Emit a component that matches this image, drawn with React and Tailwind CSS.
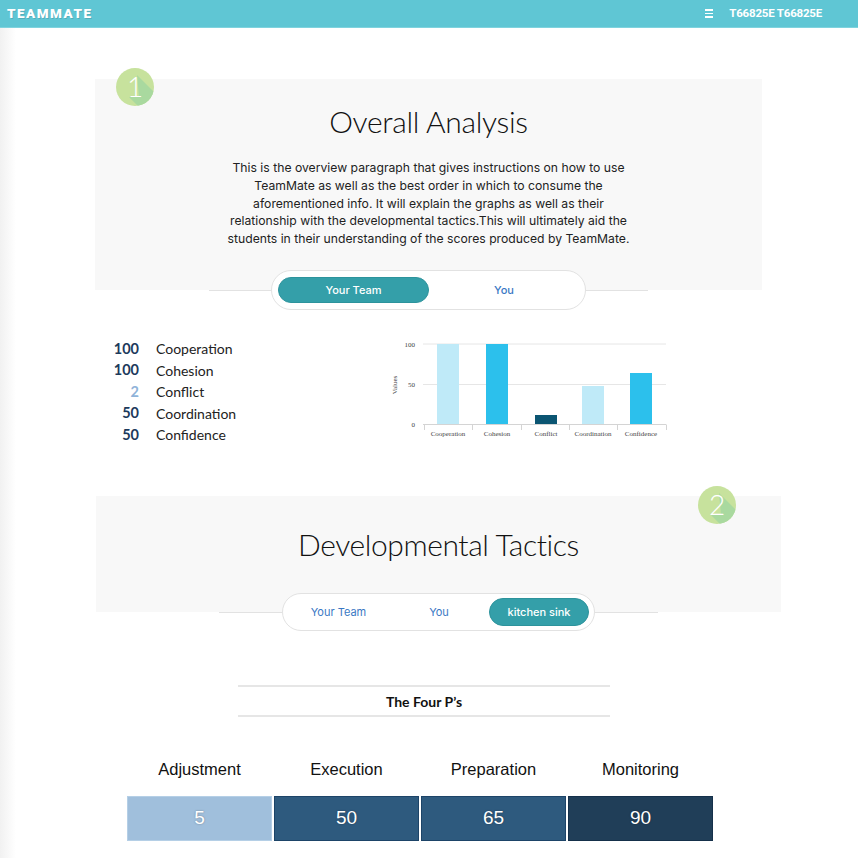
import React from "react";

function Badge({ n }) {
  return (
    <svg width="40" height="40" viewBox="0 0 40 40">
      <defs>
        <clipPath id={"c" + n}>
          <circle cx="20" cy="20" r="19" />
        </clipPath>
      </defs>
      <circle cx="20" cy="20" r="19" fill="#c7e29d" />
      <polygon points="22,8 52,38 52,52 36,52 14,30 24,30" fill="#a9d99f" clipPath={`url(#c${n})`} />
      <text x="20" y="30" textAnchor="middle" fontFamily="Lato, sans-serif" fontWeight="300" fontSize="28" fill="#ffffff">{n}</text>
    </svg>
  );
}

function Chart() {
  const bars = [
    { c: 63, v: 80, f: "#bfeaf8", label: "Cooperation" },
    { c: 112, v: 80, f: "#2cc0ec", label: "Cohesion" },
    { c: 161, v: 9, f: "#0b5572", label: "Conflict" },
    { c: 208, v: 38, f: "#bfeaf8", label: "Coordination" },
    { c: 256, v: 51, f: "#2cc0ec", label: "Confidence" },
  ];
  const ticks = [39, 87, 136, 184, 232, 281];
  return (
    <svg width="300" height="115" viewBox="0 0 300 115">
      {[9, 49.5].map((y) => (
        <line key={y} x1="38" x2="281" y1={y} y2={y} stroke="#e6e6e6" strokeWidth="1" />
      ))}
      <line x1="38" x2="281" y1="89.5" y2="89.5" stroke="#d4d4d4" strokeWidth="1" />
      {ticks.map((x) => (
        <line key={x} x1={x + 0.5} x2={x + 0.5} y1="89.5" y2="95" stroke="#d4d4d4" strokeWidth="1" />
      ))}
      <g fontFamily="'Liberation Serif', serif" fontSize="7" fill="#444">
        <text x="30" y="11.5" textAnchor="end">100</text>
        <text x="30" y="52" textAnchor="end">50</text>
        <text x="30" y="92" textAnchor="end">0</text>
        <text x="12" y="50" textAnchor="middle" transform="rotate(-90 12 50)">Values</text>
        {bars.map((b) => (
          <text key={b.label} x={b.c} y="100.5" textAnchor="middle">{b.label}</text>
        ))}
      </g>
      {bars.map((b) => (
        <rect key={b.label} x={b.c - 11} y={89 - b.v} width="22" height={b.v} fill={b.f} />
      ))}
    </svg>
  );
}

export default function App() {
  const stats = [
    ["100", "Cooperation", "text-[#1d3a5c]"],
    ["100", "Cohesion", "text-[#1d3a5c]"],
    ["2", "Conflict", "text-[#8fb3d9]"],
    ["50", "Coordination", "text-[#1d3a5c]"],
    ["50", "Confidence", "text-[#1d3a5c]"],
  ];
  const paragraph = [
    "This is the overview paragraph that gives instructions on how to use",
    "TeamMate as well as the best order in which to consume the",
    "aforementioned info. It will explain the graphs as well as their",
    "relationship with the developmental tactics.This will ultimately aid the",
    "students in their understanding of the scores produced by TeamMate.",
  ];
  const ps = [
    ["Adjustment", "5", "bg-[#a0bfdc] border-[#b5cfe6]"],
    ["Execution", "50", "bg-[#2e5a7e] border-[#1d4468]"],
    ["Preparation", "65", "bg-[#2e5a7e] border-[#1d4468]"],
    ["Monitoring", "90", "bg-[#203e58] border-[#15304a]"],
  ];
  return (
    <div className="relative w-[858px] h-[858px] overflow-hidden bg-white font-['Lato',sans-serif]">
      <div className="absolute left-0 top-[28px] bottom-0 w-[16px] bg-gradient-to-r from-[#f1f1f1] to-white" />
      {/* header */}
      <header className="h-[28px] bg-[#5fc6d4] border-b border-[#7fd3de] flex items-center px-[7px]">
        <span className="font-['Roboto',sans-serif] font-black text-[13.5px] tracking-[1.5px] text-white [text-shadow:1px_1px_0_rgba(0,0,0,0.12)]">TEAMMATE</span>
        <div className="ml-auto flex items-center mr-[29px]">
          <div className="flex flex-col gap-[2px] mr-[16px]">
            <span className="block w-[8px] h-[1.5px] bg-white" />
            <span className="block w-[8px] h-[1.5px] bg-white" />
            <span className="block w-[8px] h-[1.5px] bg-white" />
          </div>
          <span className="font-['Roboto',sans-serif] font-bold text-[11.5px] text-white tracking-[-0.2px]">T66825E T66825E</span>
        </div>
      </header>

      {/* section 1 */}
      <section className="relative mt-[51px] ml-[95px] w-[667px] h-[211px] bg-[#f8f8f8] pt-[24px] flex flex-col items-center">
        <div className="absolute left-[20px] top-[-12px]"><Badge n="1" /></div>
        <h1 className="text-[30px] leading-[36px] font-light text-[#111] tracking-[-0.3px]">Overall Analysis</h1>
        <p className="mt-[20px] font-['Inter',sans-serif] text-[12.2px] leading-[17.75px] text-[#222] text-center">
          {paragraph.map((l) => (
            <span key={l} className="block">{l}</span>
          ))}
        </p>
      </section>
      <div className="relative -mt-[20px] ml-[209px] w-[439px] flex items-center">
        <div className="flex-1 h-px bg-[#e2e2e2]" />
        <div className="flex p-[6px] bg-white border border-[#e2e2e2] rounded-full font-['Inter',sans-serif] text-[11px]">
          <div className="w-[151px] h-[26px] rounded-full bg-[#349fa9] border border-[#2d939c] text-white font-medium flex items-center justify-center">Your Team</div>
          <div className="w-[150px] h-[26px] text-[#3a78c4] font-medium flex items-center justify-center">You</div>
        </div>
        <div className="flex-1 h-px bg-[#e2e2e2]" />
      </div>

      {/* stats + chart */}
      <div className="mt-[25px] h-[110px] flex">
        <div className="ml-[100px] w-[285px] pt-[3px] flex flex-col">
          {stats.map(([n, l, c]) => (
            <div key={l} className="flex h-[21.5px] items-center">
              <span className={`w-[39px] text-right font-bold text-[14.5px] ${c}`}>{n}</span>
              <span className="ml-[17px] text-[14px] text-[#222]">{l}</span>
            </div>
          ))}
        </div>
        <div>
          <Chart />
        </div>
      </div>

      {/* section 2 */}
      <section className="relative mt-[51px] ml-[96px] w-[685px] h-[116px] bg-[#f8f8f8] pt-[30px] flex flex-col items-center">
        <div className="absolute left-[601px] top-[-11px]"><Badge n="2" /></div>
        <h2 className="text-[30px] leading-[36px] font-light text-[#111] tracking-[-0.4px]">Developmental Tactics</h2>
      </section>
      <div className="relative -mt-[19px] ml-[219px] w-[439px] flex items-center">
        <div className="flex-1 h-px bg-[#e2e2e2]" />
        <div className="flex items-center p-[5px] pl-[5px] h-[38px] bg-white border border-[#e2e2e2] rounded-full font-['Inter',sans-serif] text-[11px]">
          <div className="w-[101px] h-[28px] text-[#3a78c4] flex items-center justify-center">Your Team</div>
          <div className="w-[100px] h-[28px] text-[#3a78c4] flex items-center justify-center">You</div>
          <div className="w-[100px] h-[28px] rounded-full bg-[#349fa9] border border-[#2d939c] text-white font-medium flex items-center justify-center">kitchen sink</div>
        </div>
        <div className="flex-1 h-px bg-[#e2e2e2]" />
      </div>

      {/* four p's */}
      <div className="mt-[54px] ml-[238px] w-[372px] h-[32px] border-y-2 border-[#e6e6e6] flex items-center justify-center">
        <span className="font-bold text-[14px] text-[#111]">The Four P’s</span>
      </div>
      <div className="mt-[42px] ml-[127px] w-[586px] grid grid-cols-4 gap-[2px] font-['Liberation_Sans',sans-serif]">
        {ps.map(([l]) => (
          <div key={l} className="text-center text-[16.5px] leading-[20px] text-[#111]">{l}</div>
        ))}
        {ps.map(([l, v, c]) => (
          <div key={l + "b"} className={`mt-[15px] h-[45px] border ${c} flex items-center justify-center text-white text-[19px] [text-shadow:0_0_2px_rgba(0,0,0,0.35)]`}>{v}</div>
        ))}
      </div>
    </div>
  );
}
